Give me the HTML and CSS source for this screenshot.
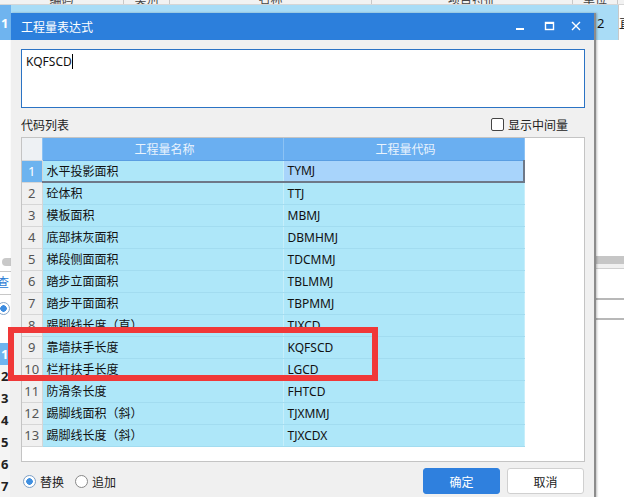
FILE: index.html
```html
<!DOCTYPE html>
<html lang="zh-CN">
<head>
    <meta charset="UTF-8">
    <meta name="viewport" content="width=device-width, initial-scale=1.0">
    <title>工程量表达式</title>
    <link rel="stylesheet" href="styles.css">
</head>
<body>
    <div class="app">
        <div class="app-head">
            <span class="hc w124">编码</span>
            <span class="hc w46">类别</span>
            <span class="hc w202">名称</span>
            <span class="hc w201">项目特征</span>
            <span class="hc w45">单位</span>
            <span class="hc grow"></span>
        </div>
        <div class="app-row">
            <span class="app-rn">1</span>
            <span class="app-fill"></span>
            <span class="app-num">2</span>
            <span class="app-white">直</span>
        </div>
        <div class="app-body">
            <div class="left-strip">
                <div class="ls-space"></div>
                <div class="ls-dot"></div>
                <div class="ls-line"></div>
                <div class="ls-link">查</div>
                <div class="ls-radio"><span></span></div>
                <div class="ls-gap"></div>
                <div class="ls-rn active">1</div>
                <div class="ls-rn">2</div>
                <div class="ls-rn">3</div>
                <div class="ls-rn">4</div>
                <div class="ls-rn">5</div>
                <div class="ls-rn">6</div>
                <div class="ls-rn">7</div>
            </div>
            <div class="app-mid"></div>
            <div class="right-strip">
                <div class="rs-space"></div>
                <div class="rs-bar"></div>
                <div class="rs-light"></div>
                <div class="rs-row"></div>
                <div class="rs-row short"></div>
                <div class="rs-rest"></div>
            </div>
        </div>
    </div>

    <div class="dialog">
        <div class="title-bar">
            <span class="title">工程量表达式</span>
            <div class="controls">
                <svg width="30" height="27" viewBox="0 0 30 27"><rect x="9" y="15" width="8" height="2" fill="#fff"/></svg>
                <svg width="27" height="27" viewBox="0 0 27 27"><rect x="8.5" y="9.5" width="8" height="7" fill="none" stroke="#fff" stroke-width="1.4"/><rect x="8" y="9" width="9" height="2" fill="#fff"/></svg>
                <svg width="28" height="27" viewBox="0 0 28 27"><path d="M8 9 L16 17 M16 9 L8 17" stroke="#fff" stroke-width="1.4" fill="none"/></svg>
            </div>
        </div>
        <div class="dialog-body">
            <div class="expr">KQFSCD<span class="caret"></span></div>
            <div class="list-head">
                <span>代码列表</span>
                <label class="check"><span class="box"></span>显示中间量</label>
            </div>
            <div class="panel">
                <table class="grid">
                    <thead>
                        <tr>
                            <th class="rn"></th>
                            <th class="name">工程量名称</th>
                            <th class="code">工程量代码</th>
                        </tr>
                    </thead>
                    <tbody>
                        <tr class="selected"><td class="rn">1</td><td>水平投影面积</td><td class="code">TYMJ</td></tr>
                        <tr><td class="rn">2</td><td>砼体积</td><td class="code">TTJ</td></tr>
                        <tr><td class="rn">3</td><td>模板面积</td><td class="code">MBMJ</td></tr>
                        <tr><td class="rn">4</td><td>底部抹灰面积</td><td class="code">DBMHMJ</td></tr>
                        <tr><td class="rn">5</td><td>梯段侧面面积</td><td class="code">TDCMMJ</td></tr>
                        <tr><td class="rn">6</td><td>踏步立面面积</td><td class="code">TBLMMJ</td></tr>
                        <tr><td class="rn">7</td><td>踏步平面面积</td><td class="code">TBPMMJ</td></tr>
                        <tr><td class="rn">8</td><td>踢脚线长度（直）</td><td class="code">TJXCD</td></tr>
                        <tr><td class="rn">9</td><td>靠墙扶手长度</td><td class="code">KQFSCD</td></tr>
                        <tr><td class="rn">10</td><td>栏杆扶手长度</td><td class="code">LGCD</td></tr>
                        <tr><td class="rn">11</td><td>防滑条长度</td><td class="code">FHTCD</td></tr>
                        <tr><td class="rn">12</td><td>踢脚线面积（斜）</td><td class="code">TJXMMJ</td></tr>
                        <tr><td class="rn">13</td><td>踢脚线长度（斜）</td><td class="code">TJXCDX</td></tr>
                    </tbody>
                </table>
            </div>
            <div class="footer">
                <label class="radio on"><span class="dot"></span>替换</label>
                <label class="radio"><span class="dot"></span>追加</label>
                <span class="spacer"></span>
                <button class="btn primary">确定</button>
                <button class="btn">取消</button>
            </div>
        </div>
        <span class="grip"></span>
    </div>

    <div class="mark"></div>
</body>
</html>
```

FILE: styles.css
```css
* {
    box-sizing: border-box;
}

body {
    margin: 0;
    width: 624px;
    height: 497px;
    overflow: hidden;
    position: relative;
    font-family: "Noto Sans", "Noto Sans CJK SC", sans-serif;
    font-size: 12px;
    color: #222;
    background-color: #fff;
}

/* background application */
.app {
    display: flex;
    flex-direction: column;
    height: 497px;
}

.app-head {
    display: flex;
    height: 6px;
    background-color: #f2f2f2;
    border-bottom: 1px solid #d6d6d6;
    overflow: hidden;
}

.hc {
    border-right: 1px solid #c8c8c8;
    line-height: 0;
    font-size: 12px;
    color: #444;
    text-align: center;
}

.w124 { width: 124px; }
.w46 { width: 46px; }
.w202 { width: 202px; }
.w201 { width: 201px; }
.w45 { width: 45px; }
.grow { flex: 1; border-right: none; }

.app-row {
    display: flex;
    height: 41px;
    background-color: #a9dcf6;
    align-items: stretch;
}

.app-rn {
    width: 11px;
    background-color: #6fb4ef;
    color: #fff;
    font-weight: bold;
    font-size: 13px;
    display: flex;
    align-items: center;
    padding-left: 1px;
}

.app-fill {
    flex: 1;
}

.app-num {
    width: 21px;
    display: flex;
    align-items: center;
    font-size: 13px;
    color: #111;
}

.app-white {
    width: 6px;
    background-color: #fff;
    border-left: 1px solid #c8c8c8;
    display: flex;
    align-items: center;
    overflow: hidden;
    font-size: 13px;
}

.app-body {
    flex: 1;
    display: flex;
}

.left-strip {
    width: 11px;
    display: flex;
    flex-direction: column;
    overflow: hidden;
}

.ls-space { height: 218px; }

.ls-dot {
    height: 8px;
    width: 16px;
    margin-left: 2px;
    border-radius: 4px;
    background-color: #c9c9c9;
}

.ls-line {
    height: 6px;
    border-bottom: 1px solid #c8c8c8;
}

.ls-link {
    height: 23px;
    color: #2a7bd4;
    font-size: 12px;
    line-height: 22px;
    text-indent: -3px;
    border-bottom: 1px solid #c8c8c8;
}

.ls-radio {
    height: 26px;
    display: flex;
    align-items: center;
}

.ls-radio span {
    display: block;
    width: 13px;
    height: 13px;
    margin-left: -3px;
    border: 1px solid #8aa7c8;
    border-radius: 50%;
    background: radial-gradient(circle, #3d8ce0 3px, #fff 3.5px);
}

.ls-gap { height: 22px; }

.ls-rn {
    height: 22px;
    line-height: 22px;
    font-weight: bold;
    font-size: 13px;
    padding-left: 1px;
    color: #222;
    background-color: #f4f4f4;
}

.ls-rn.active {
    background-color: #6fb4ef;
    color: #fff;
}

.app-mid { flex: 1; }

.right-strip {
    width: 28px;
    display: flex;
    flex-direction: column;
}

.rs-space { height: 216px; }

.rs-bar {
    height: 8px;
    background-color: #c6c6c6;
}

.rs-light {
    height: 5px;
    background-color: #f0f0f0;
    border-bottom: 1px solid #d0d0d0;
}

.rs-row {
    height: 31px;
    border-bottom: 2px solid #b8b8b8;
}

.rs-row.short {
    height: 20px;
}

.rs-rest { flex: 1; }

/* dialog */
.dialog {
    position: absolute;
    left: 11px;
    top: 13px;
    width: 585px;
    height: 490px;
    background-color: #f0f0f0;
    border-right: 2px solid #8c8c8c;
    box-shadow: 1px 0 2px rgba(0, 0, 0, 0.25);
}

.title-bar {
    height: 27px;
    background-color: #2c7fdc;
    display: flex;
    align-items: center;
    padding-left: 10px;
}

.title {
    color: #fff;
    font-size: 12px;
    font-family: "Noto Sans CJK SC", sans-serif;
    flex: 1;
}

.controls {
    display: flex;
    align-items: center;
    margin-right: 2px;
}

.controls svg {
    display: block;
}

.dialog-body {
    padding: 9px 9px 0 10px;
    display: flex;
    flex-direction: column;
}

.expr {
    height: 59px;
    background-color: #fff;
    border: 1px solid #2b73c4;
    padding: 3px 4px;
    font-size: 12px;
    color: #111;
    line-height: 18px;
}

.caret {
    display: inline-block;
    width: 1px;
    height: 15px;
    background-color: #000;
    vertical-align: -3px;
}

.list-head {
    display: flex;
    justify-content: space-between;
    align-items: center;
    height: 20px;
    margin-top: 6px;
    margin-bottom: 3px;
    padding-right: 17px;
    font-family: "Noto Sans CJK SC", sans-serif;
    color: #222;
}

.check {
    display: flex;
    align-items: center;
}

.box {
    width: 13px;
    height: 13px;
    border: 1px solid #444;
    border-radius: 2px;
    background-color: #fff;
    margin-right: 4px;
}

.panel {
    height: 325px;
    background-color: #fff;
    border: 1px solid #c4c4c4;
}

.grid {
    border-collapse: collapse;
    table-layout: fixed;
    width: 502px;
    font-family: "Noto Sans", "Noto Sans CJK SC", sans-serif;
    font-size: 12px;
}

.grid th,
.grid td {
    height: 22px;
    padding: 0 0 0 4px;
    white-space: nowrap;
    overflow: hidden;
}

.grid th {
    background-color: #6aaff1;
    color: #e9f3fd;
    font-weight: normal;
    font-family: "Noto Sans CJK SC", sans-serif;
    text-align: center;
    border-right: 1px solid #8cc2f4;
    border-bottom: 1px solid #5a9ee2;
}

.grid th.rn {
    width: 20px;
    background-color: #eef1f4;
    border-bottom: 1px solid #d4d8dc;
}

.grid th.name,
.grid th.code {
    width: 241px;
}

.grid td {
    background-color: #aee7f9;
    border-bottom: 1px solid #a2dcf0;
    border-right: 1px solid #c6eefa;
    color: #111;
}

.grid td.rn {
    background-color: #f0f0f0;
    color: #555;
    text-align: center;
    padding: 0;
    font-size: 13px;
    border-right: 1px solid #d6d6d6;
    border-bottom: 1px solid #d6d6d6;
}

.grid tr.selected td {
    border-bottom: 2px solid #6e7888;
}

.grid tr.selected td.rn {
    background-color: #6cb3ef;
    color: #fff;
    border-bottom: 1px solid #d6d6d6;
}

.grid tr.selected td.code {
    background-color: #a8d4fb;
    border-right: 2px solid #6e7888;
}

.footer {
    display: flex;
    align-items: center;
    height: 26px;
    margin-top: 6px;
    padding-left: 2px;
    padding-right: 1px;
    font-family: "Noto Sans CJK SC", sans-serif;
}

.radio {
    display: flex;
    align-items: center;
    margin-right: 11px;
    font-size: 12px;
    color: #222;
}

.radio .dot {
    width: 13px;
    height: 13px;
    border: 1px solid #888;
    border-radius: 50%;
    background-color: #fff;
    margin-right: 4px;
}

.radio.on .dot {
    border-color: #7da0c6;
    background: radial-gradient(circle, #3f8fe0 3px, #fff 3.5px);
}

.spacer { flex: 1; }

.btn {
    width: 77px;
    height: 26px;
    margin-left: 7px;
    border: 1px solid #d0d0d0;
    border-radius: 3px;
    background-color: #fff;
    font-family: "Noto Sans CJK SC", sans-serif;
    font-size: 12px;
    color: #222;
    padding: 0;
}

.btn.primary {
    background-color: #2f80de;
    border-color: #2f80de;
    color: #fff;
}

.grip {
    position: absolute;
    right: 5px;
    bottom: 1px;
    width: 4px;
    height: 5px;
    background: radial-gradient(circle, #888 1px, transparent 1.2px) 0 0 / 3px 3px;
}

/* annotation */
.mark {
    position: absolute;
    left: 8px;
    top: 327px;
    width: 370px;
    height: 54px;
    border: 6px solid #f03838;
}
```
